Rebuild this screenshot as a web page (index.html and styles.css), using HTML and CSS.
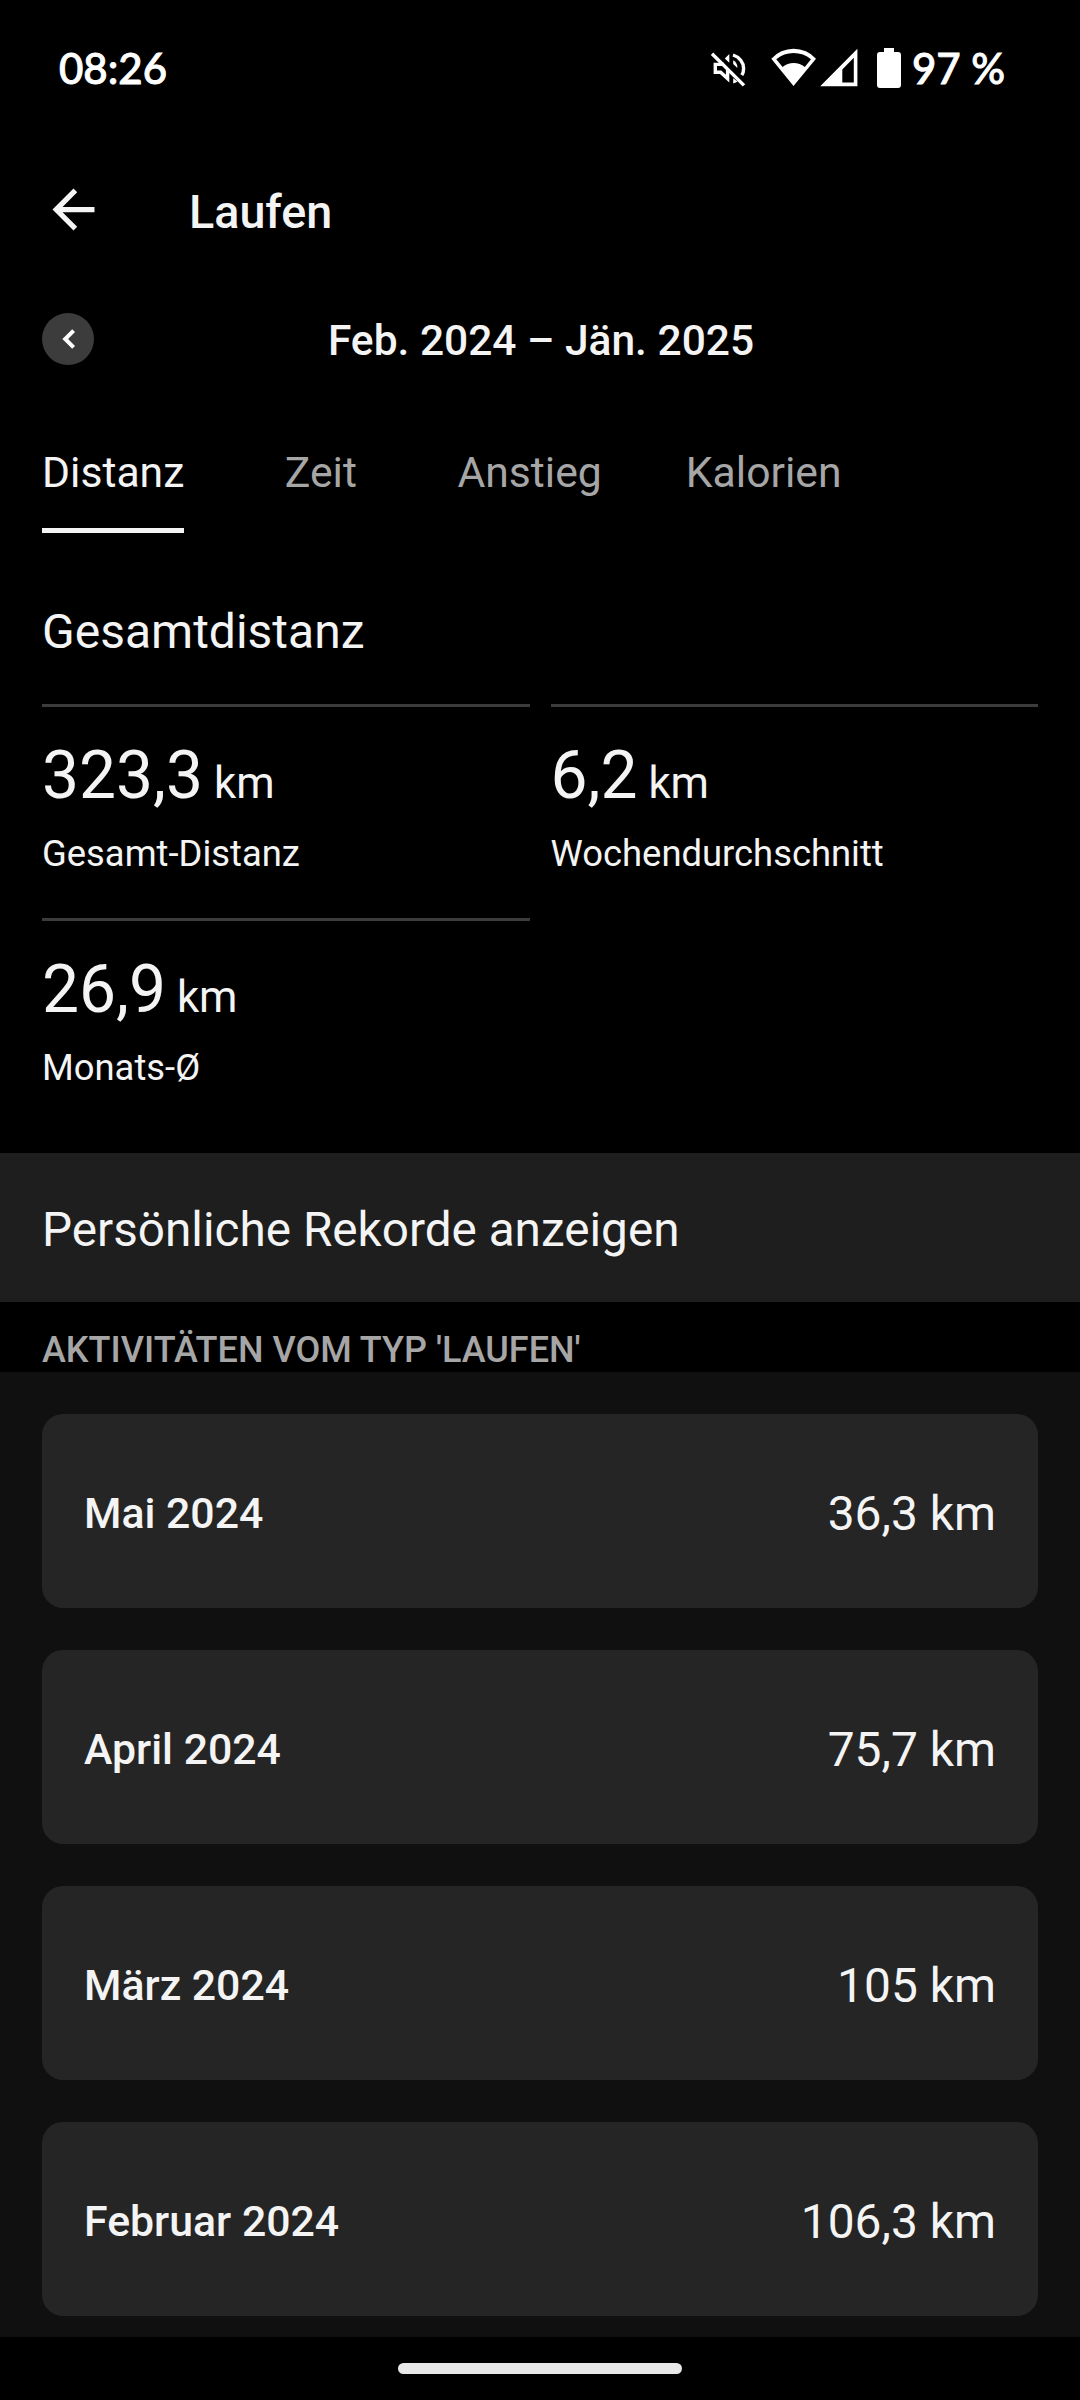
FILE: index.html
```html
<!DOCTYPE html>
<html lang="de">
<head>
<meta charset="utf-8">
<title>Laufen</title>
<link rel="stylesheet" href="styles.css">
</head>
<body>
<div class="status-bar">
  <span class="clock">08:26</span>
  <div class="status-icons">
    <svg class="icon-mute" viewBox="0 -2 50 60" fill="none" stroke="#fff" stroke-width="3.4">
      <path d="M24 24.4H15.3V32.2H20.6L27.6 38.6V30"/>
      <path d="M29.3 14L24.8 18.6L29.3 22.8Z" fill="#fff" stroke="none"/>
      <path d="M33.2 20.2C36 21.6 37.6 24.6 37.4 28L33.2 24Z" fill="#fff" stroke="none"/>
      <path d="M33 15C39.5 17 43.6 22.4 43.6 28.4C43.6 31 43 33.3 41.8 35.2"/>
      <path d="M33.2 38.2L37.4 41.6C36 42.6 34.8 43 33.2 43.4Z" fill="#fff" stroke="none"/>
      <path d="M12 13.8L44 45.4"/>
    </svg>
    <svg class="icon-network" viewBox="70 -2 90 60" fill="#fff" fill-rule="evenodd">
      <path d="M93.5 46L71.3 18.7A30 30 0 0 1 116 18.7ZM76.3 19.3L82.6 27A17 17 0 0 1 104.8 27L111 19.3A27 27 0 0 0 76.3 19.3Z"/>
      <path d="M120.2 46.2L157.4 8.8V46.2ZM142.3 29.4V42.6H153.8V17.8Z"/>
    </svg>
    <svg class="icon-battery" viewBox="0 0 26 60" fill="#fff">
      <path d="M8 10h10v4h4q3 0 3 3v30q0 3-3 3H4q-3 0-3-3V17q0-3 3-3h4z"/>
    </svg>
    <span class="battery-level">97 %</span>
  </div>
</div>

<header class="app-bar">
  <svg class="icon-back" viewBox="0 0 24 24" fill="#f4f4f4"><path d="M20 11H7.83l5.59-5.59L12 4l-8 8 8 8 1.41-1.41L7.83 13H20v-2z"/></svg>
  <h1 class="title">Laufen</h1>
</header>

<div class="period">
  <button class="period-prev" aria-label="Zurück"><svg viewBox="0 0 52 52" fill="none" stroke="#fff" stroke-width="4"><path d="M31.6 17.6L23.2 26L31.6 34.4"/></svg></button>
  <span class="period-label">Feb. 2024 – Jän. 2025</span>
</div>

<nav class="tabs">
  <div class="tab tab-active"><span class="tab-label">Distanz</span></div>
  <div class="tab"><span class="tab-label">Zeit</span></div>
  <div class="tab"><span class="tab-label">Anstieg</span></div>
  <div class="tab"><span class="tab-label">Kalorien</span></div>
</nav>

<section class="summary">
  <h2 class="summary-title">Gesamtdistanz</h2>
  <div class="stats">
    <div class="stat"><div class="stat-value">323,3<span class="unit"> km</span></div><div class="stat-label">Gesamt-Distanz</div></div>
    <div class="stat"><div class="stat-value">6,2<span class="unit"> km</span></div><div class="stat-label">Wochendurchschnitt</div></div>
    <div class="stat"><div class="stat-value">26,9<span class="unit"> km</span></div><div class="stat-label">Monats-Ø</div></div>
  </div>
</section>

<div class="records">Persönliche Rekorde anzeigen</div>
<h3 class="list-heading">AKTIVITÄTEN VOM TYP 'LAUFEN'</h3>
<main class="months">
  <div class="month"><span class="month-name">Mai 2024</span><span class="month-value">36,3 km</span></div>
  <div class="month"><span class="month-name">April 2024</span><span class="month-value">75,7 km</span></div>
  <div class="month"><span class="month-name">März 2024</span><span class="month-value">105 km</span></div>
  <div class="month"><span class="month-name">Februar 2024</span><span class="month-value">106,3 km</span></div>
</main>
<footer class="gesture-bar"><div class="gesture-pill"></div></footer>
</body>
</html>
```
FILE: styles.css
```css
* { box-sizing: border-box; }

body {
  margin: 0;
  width: 1080px;
  height: 2400px;
  display: flex;
  flex-direction: column;
  overflow: hidden;
  background: #000;
  color: #f4f4f4;
  font-family: Roboto, sans-serif;
}

body > * { flex-shrink: 0; }
h1, h2, h3 { margin: 0; font-weight: 400; }
svg { display: block; }

.status-bar {
  height: 136px;
  padding: 0 72px 0 59px;
  display: flex;
  align-items: center;
  justify-content: space-between;
  color: #fff;
  font: 500 42px/50px Lato, sans-serif;
  -webkit-text-stroke: 0.9px #fff;
}
.clock, .battery-level { padding-bottom: 1px; white-space: nowrap; }
.status-icons { display: flex; align-items: center; }
.icon-mute { width: 50px; height: 60px; margin-right: 20px; }
.icon-network { width: 90px; height: 60px; margin-right: 16px; }
.icon-battery { width: 26px; height: 60px; margin-right: 10px; }
.battery-level { width: 96px; }

.app-bar {
  height: 147px;
  padding: 0 42px;
  display: flex;
  align-items: center;
  gap: 84px;
}
.icon-back { width: 63px; height: 63px; }
.title { padding-top: 5px; font-size: 46.7px; font-weight: 500; line-height: 56px; }

.period {
  margin: 30px 42px 0;
  height: 52px;
  display: grid;
  grid-template-columns: 52px 1fr 52px;
  align-items: center;
}
.period-prev {
  width: 52px;
  height: 52px;
  padding: 0;
  border: 0;
  border-radius: 50%;
  background: #3c3c3c;
}
.period-label {
  padding: 3px 0 0 2px;
  text-align: center;
  font-size: 42.5px;
  font-weight: 500;
  line-height: 49px;
}

.tabs { margin-top: 77px; display: flex; height: 91px; color: #a6a6a6; }
.tab { min-width: 189px; padding: 0 42px; display: flex; justify-content: center; }
.tab-label {
  font-size: 42.7px;
  line-height: 60px;
  border-bottom: 5px solid transparent;
}
.tab-active .tab-label { color: #f4f4f4; border-color: #f4f4f4; }

.summary { height: 620px; padding: 69px 42px 0; }
.summary-title { font-size: 48px; line-height: 60px; }
.stats {
  margin-top: 42px;
  display: grid;
  grid-template-columns: 1fr 1fr;
  grid-auto-rows: 214px;
  column-gap: 21px;
}
.stat { border-top: 3px solid #3c3c3c; padding-top: 29px; }
.stat-value { font-size: 65.9px; line-height: 80px; }
.unit { font-size: 43.8px; line-height: 1; }
.stat-label { margin-top: 16px; font-size: 36.4px; line-height: 44px; }

.records {
  height: 149px;
  padding: 4px 42px 0;
  display: flex;
  align-items: center;
  background: #1e1e1e;
  font-size: 47.7px;
}
.list-heading {
  height: 70px;
  padding: 26px 42px 0;
  color: #a6a6a6;
  font-size: 36px;
  font-weight: 500;
  line-height: 44px;
}

.months {
  height: 965px;
  padding: 42px 42px 0;
  display: flex;
  flex-direction: column;
  gap: 42px;
  background: #101010;
}
.month {
  height: 194px;
  padding: 5px 42px 0;
  display: flex;
  align-items: center;
  justify-content: space-between;
  border-radius: 21px;
  background: #252525;
}
.month-name { padding-bottom: 2px; font-size: 42.8px; font-weight: 500; }
.month-value { padding-top: 1px; font-size: 47.9px; }

.gesture-bar { height: 63px; display: flex; align-items: center; justify-content: center; }
.gesture-pill { width: 284px; height: 11px; border-radius: 5.5px; background: #e8e8e8; }
```
